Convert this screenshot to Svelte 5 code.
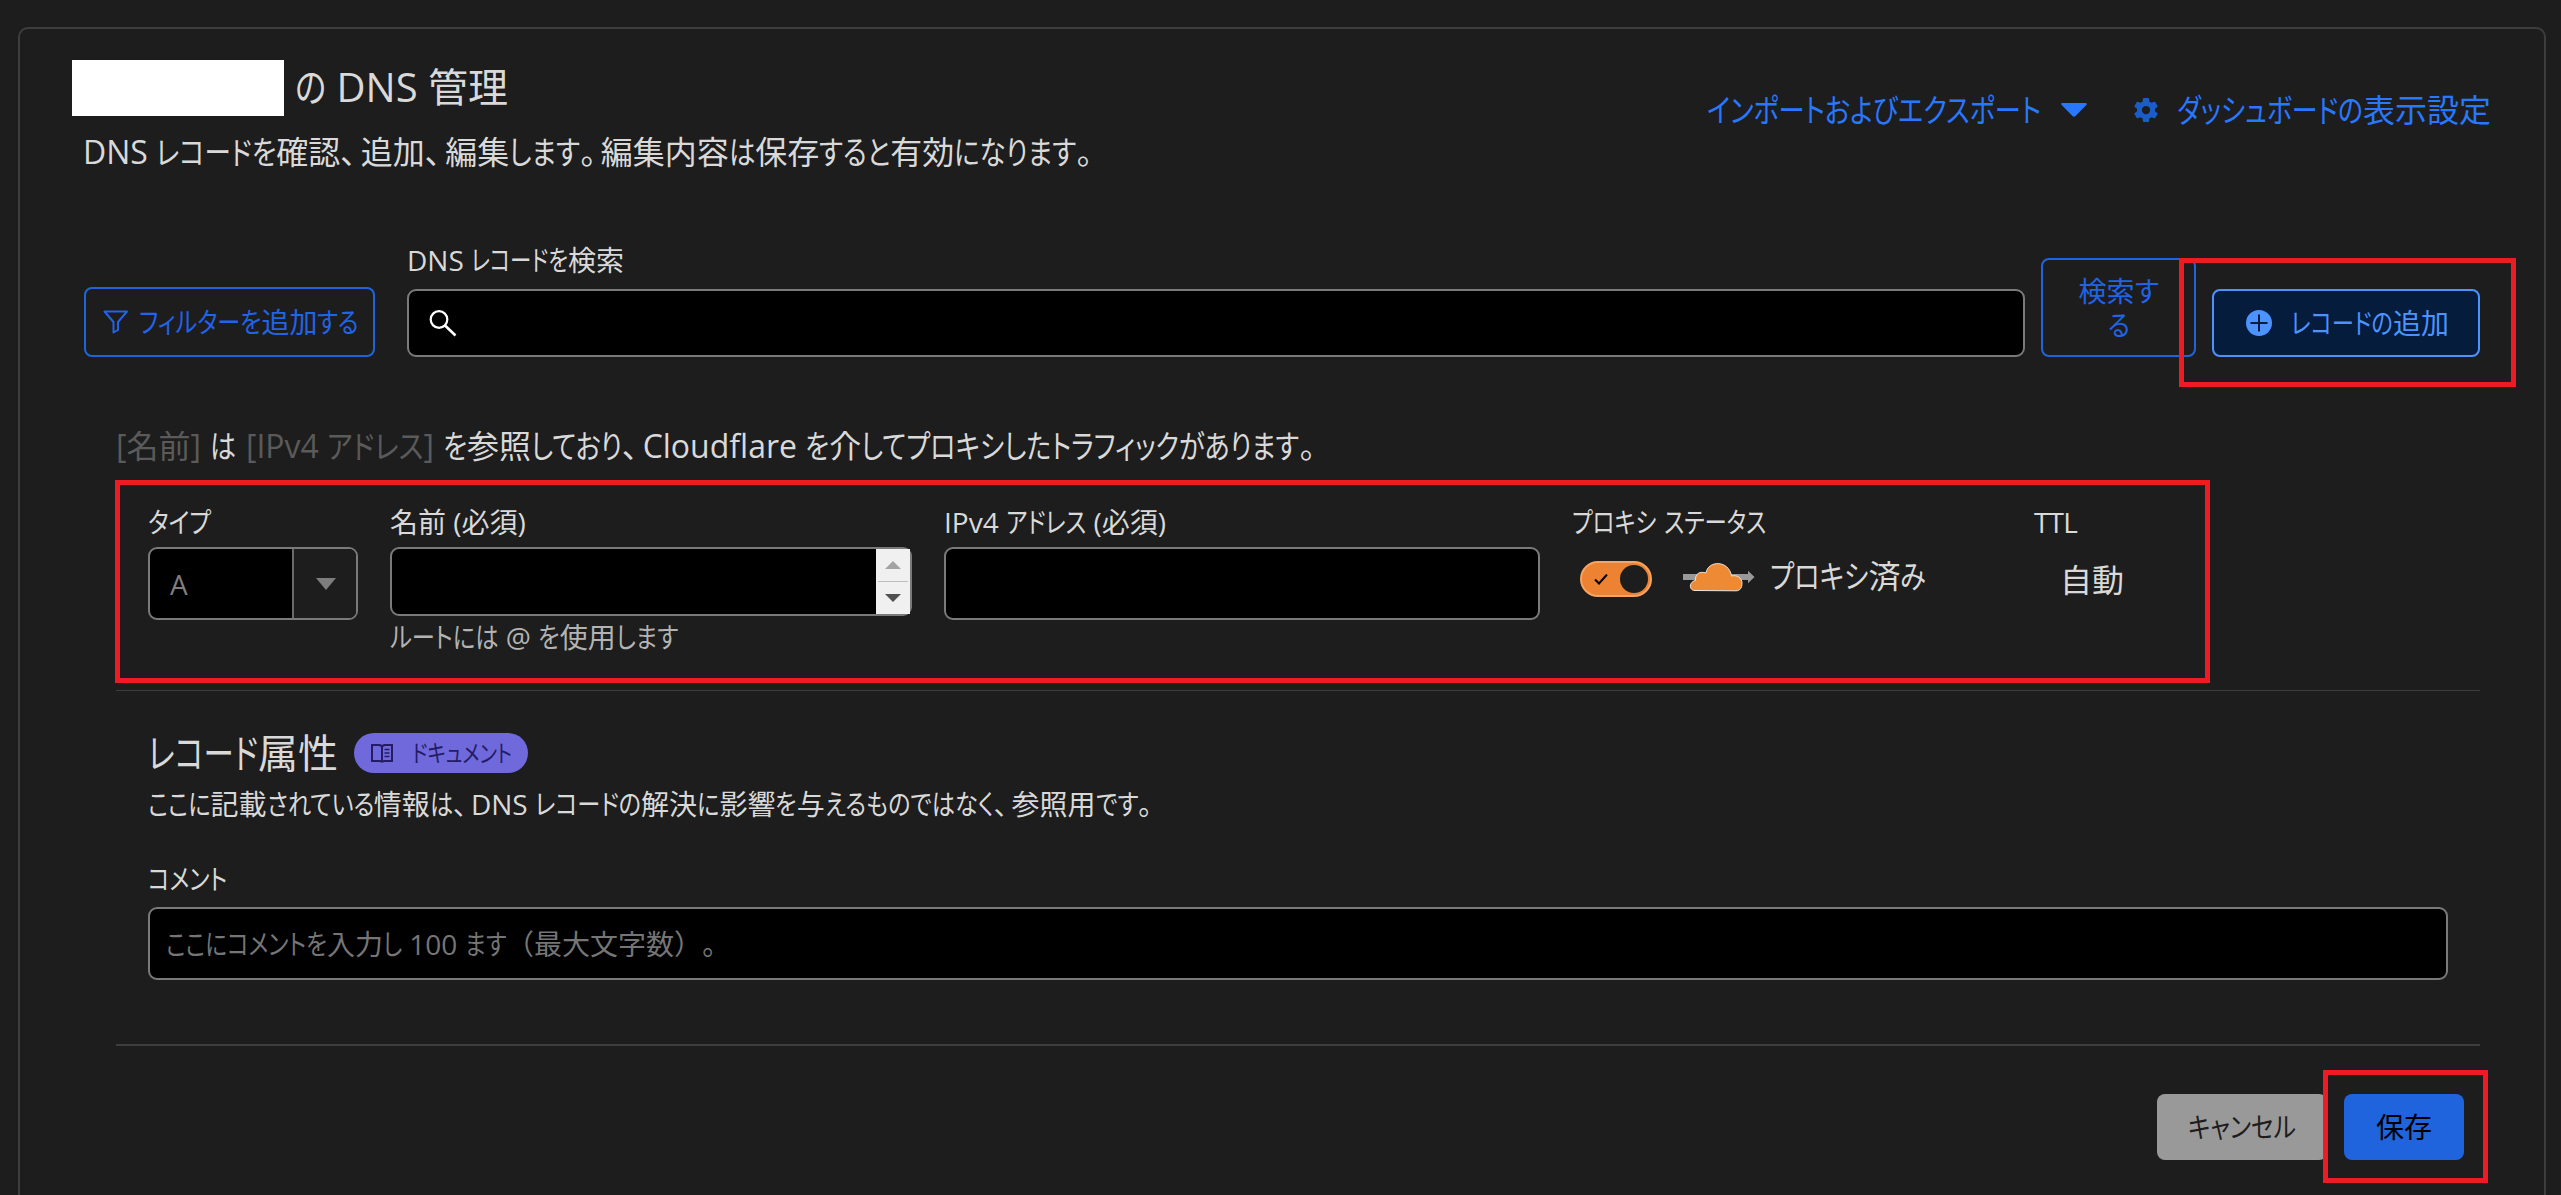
<script>
  // Kana are set narrower than kanji and Latin, as in a condensed UI face.
  const SPLIT = /([\u3040-\u30ff]+|[\u3001\u3002])/;
  const kindOf = (text) =>
    /^[\u3001\u3002]$/.test(text) ? 'stop' : /^[\u3040-\u30ff]/.test(text) ? 'kana' : 'plain';
  const runs = (s) =>
    s
      .split(SPLIT)
      .filter(Boolean)
      .map((text) => ({ text, kind: kindOf(text) }));

  // Condenses the kana runs of a line until the line is `target` px wide.
  function fit(node, target) {
    const kana = [...node.querySelectorAll('.k')];
    if (!kana.length) return;
    const widths = kana.map((k) => k.firstElementChild.getBoundingClientRect().width);
    const sum = widths.reduce((a, b) => a + b, 0);
    const rest = node.getBoundingClientRect().width - sum;
    const ratio = Math.max(0.6, Math.min(1.1, (target - rest) / sum));
    kana.forEach((k, i) => {
      k.style.width = `${widths[i] * ratio}px`;
      k.firstElementChild.style.transform = `scaleX(${ratio})`;
    });
  }
</script>

{#snippet t(text, width)}<span class="t" use:fit={width}>{#each runs(text) as r}{#if r.kind === 'kana'}<span class="k"><span class="ki">{r.text}</span></span>{:else if r.kind === 'stop'}<span class="stop">{r.text}</span>{:else}{r.text}{/if}{/each}</span>{/snippet}

<div class="page">
  <main class="panel">
    <header class="head">
      <div>
        <div class="title-row">
          <span class="redacted"></span>
          <h1>{@render t('の DNS 管理', 213)}</h1>
        </div>
        <p class="lead">{@render t('DNS レコードを確認、追加、編集します。編集内容は保存すると有効になります。', 1014)}</p>
      </div>
      <nav class="links">
        <a class="link" href="#export">
          {@render t('インポートおよびエクスポート', 334)}
          <svg class="caret" width="26" height="14" viewBox="0 0 26 14"><path d="M1.500 0h23q2.200.4.800 2L14.500 13q-1.500 1.600-3 0L.700 2Q-.700.400 1.500 0z" fill="currentColor" /></svg>
        </a>
        <a class="link" href="#settings">
          <svg class="gear" width="30" height="30" viewBox="0 0 24 24"><path fill="currentColor" fill-rule="evenodd" d="M19.140 12.940c.040-.300.060-.610.060-.940s-.020-.640-.070-.940l2.030-1.580a.49.49 0 0 0 .120-.610l-1.920-3.320a.488.488 0 0 0-.590-.220l-2.390.960a7.030 7.030 0 0 0-1.620-.940l-.360-2.540a.484.484 0 0 0-.480-.410h-3.840c-.240 0-.430.170-.470.410l-.360 2.540c-.590.240-1.130.570-1.620.940l-2.390-.960a.48.48 0 0 0-.590.220L2.740 8.870c-.120.210-.080.470.120.610l2.030 1.580c-.050.300-.090.630-.090.940s.020.640.070.940l-2.030 1.580a.49.49 0 0 0-.120.610l1.920 3.320c.120.220.370.290.590.220l2.390-.960c.500.380 1.030.700 1.620.940l.360 2.540c.050.240.240.410.480.410h3.840c.240 0 .440-.170.470-.410l.360-2.540c.590-.240 1.130-.560 1.620-.940l2.390.960c.220.080.470 0 .590-.220l1.920-3.320a.48.48 0 0 0-.120-.610zM12 15.300a3.300 3.300 0 1 1 0-6.600 3.300 3.300 0 0 1 0 6.600z" /></svg>
          {@render t('ダッシュボードの表示設定', 314)}
        </a>
      </nav>
    </header>

    <section class="toolbar">
      <button class="btn outline filter">
        <svg width="26" height="24" viewBox="0 0 26 24"><path d="M1.500 1.500h22.500l-9 10.500v8l-4.500 2.500V12z" fill="none" stroke="currentColor" stroke-width="2" stroke-linejoin="round" /></svg>
        {@render t('フィルターを追加する', 220)}
      </button>
      <div class="search">
        <span class="label">{@render t('DNS レコードを検索', 217)}</span>
        <div class="box">
          <svg width="28" height="27" viewBox="0 0 28 27"><g fill="none" stroke="#fff" stroke-width="2.200"><circle cx="10" cy="9.500" r="8.300" /><path d="M16 15.500l10.500 10" stroke-width="2.600" /></g></svg>
        </div>
      </div>
      <button class="btn outline submit">
        <span>{@render t('検索す', 80)}</span>
        <span>{@render t('る', 22)}</span>
      </button>
      <button class="btn add">
        <svg width="26" height="26" viewBox="0 0 26 26"><circle cx="13" cy="13" r="13" fill="currentColor" /><path d="M13 4.500v17M4.500 13h17" stroke="#051c3d" stroke-width="2" /></svg>
        {@render t('レコードの追加', 158)}
      </button>
      <div class="mark mark-add"></div>
    </section>

    <p class="summary">
      <span class="dim">{@render t('[名前]', 83)}</span>
      <span>{@render t('は', 26)}</span>
      <span class="dim">{@render t('[IPv4 アドレス]', 188)}</span>
      <span>{@render t('を参照しており、Cloudflare を介してプロキシしたトラフィックがあります。', 877)}</span>
    </p>

    <section class="record">
      <div class="field">
        <span class="label">{@render t('タイプ', 63)}</span>
        <div class="box select">
          <span class="value">A</span>
          <span class="drop"><svg width="20" height="12" viewBox="0 0 20 12"><path d="M0 0h20L10 12z" fill="#7e7e7e" /></svg></span>
        </div>
      </div>
      <div class="field">
        <span class="label">{@render t('名前 (必須)', 136)}</span>
        <div class="box name">
          <div class="spin">
            <span><svg width="16" height="8" viewBox="0 0 16 8"><path d="M0 8h16L8 0z" fill="#a3a3a3" /></svg></span>
            <span><svg width="16" height="8" viewBox="0 0 16 8"><path d="M0 0h16L8 8z" fill="#505050" /></svg></span>
          </div>
        </div>
        <span class="hint">{@render t('ルートには @ を使用します', 288)}</span>
      </div>
      <div class="field">
        <span class="label">{@render t('IPv4 アドレス (必須)', 222)}</span>
        <div class="box"></div>
      </div>
      <div class="field">
        <span class="label">{@render t('プロキシ ステータス', 194)}</span>
        <div class="proxy">
          <span class="toggle">
            <svg width="14" height="11" viewBox="0 0 14 11"><path d="M1 5.500l4 4 8-9" fill="none" stroke="#000" stroke-width="2" /></svg>
            <span class="knob"></span>
          </span>
          <svg class="cloud" width="72" height="30" viewBox="0 0 72 30">
            <path d="M0 11h65V7.700L71.500 14 65 20.300V17H0z" fill="#999" />
            <path d="M12 27.500C5.500 27.500 6 18.500 12.500 17.500C12 10.500 17 8 23 10C25-3 46-3 48.500 13C54 11.500 59 15 59 20C59 25 57 27.800 53 27.800z" fill="#ee8a34" stroke="#ece4dc" stroke-width="1" />
          </svg>
          <span class="status">{@render t('プロキシ済み', 156)}</span>
        </div>
      </div>
      <div class="field">
        <span class="label ttl">TTL</span>
        <span class="auto">自動</span>
      </div>
      <div class="mark mark-record"></div>
    </section>

    <hr />

    <section class="attrs">
      <div class="attrs-head">
        <h2>{@render t('レコード属性', 190)}</h2>
        <a class="badge" href="#docs">
          <svg width="22" height="21" viewBox="0 0 22 21"><g fill="none" stroke="currentColor" stroke-width="2"><path d="M1 2h7q3 0 3 2.500Q11 2 14 2h7v16h-7q-3 0-3 1.500Q11 18 8 18H1zM11 4v15" /><path d="M13.500 6.500h5M13.500 10h5M13.500 13.500h5" stroke-width="1.600" /></g></svg>
          {@render t('ドキュメント', 100)}
        </a>
      </div>
      <p class="note">{@render t('ここに記載されている情報は、DNS レコードの解決に影響を与えるものではなく、参照用です。', 1008)}</p>
      <span class="label comment-label">{@render t('コメント', 79)}</span>
      <div class="box comment">{@render t('ここにコメントを入力し 100 ます（最大文字数）。', 554)}</div>
    </section>

    <hr class="thick" />

    <footer class="actions">
      <button class="btn cancel">{@render t('キャンセル', 108)}</button>
      <button class="btn save">保存</button>
      <div class="mark mark-save"></div>
    </footer>
  </main>
</div>

<style>
  :global(body) {
    margin: 0;
    background: #1d1d1d;
  }
  .page {
    box-sizing: border-box;
    height: 1195px;
    padding: 27px 15px 0 18px;
    overflow: hidden;
    background: #1d1d1d;
    color: #d9d9d9;
    font-family: 'Open Sans', 'Noto Sans CJK JP', sans-serif;
    font-size: 28px;
    line-height: 40px;
  }
  .panel {
    box-sizing: border-box;
    height: 1200px;
    border: 2px solid #3d3d3d;
    border-radius: 10px;
  }
  h1,
  h2,
  p {
    margin: 0;
    font-weight: 400;
    white-space: nowrap;
  }
  a {
    text-decoration: none;
  }
  svg {
    display: block;
    flex: none;
  }
  .t {
    display: inline-block;
    white-space: pre;
  }
  .k {
    display: inline-block;
  }
  .ki {
    display: inline-block;
    transform-origin: 0 50%;
    font-feature-settings: 'palt';
  }
  .stop {
    display: inline-block;
    width: 0.64em;
    font-feature-settings: 'palt';
  }
  .head {
    display: flex;
    justify-content: space-between;
    height: 207px;
    padding: 0 53px 0 52px;
  }
  .title-row {
    display: flex;
    gap: 11px;
    height: 56px;
    margin-top: 31px;
  }
  .redacted {
    width: 212px;
    background: #fff;
  }
  h1 {
    font-size: 40px;
    line-height: 54px;
  }
  .lead {
    margin: 11px 0 0 11px;
    font-size: 32px;
    line-height: 49px;
  }
  .links {
    display: flex;
    gap: 44px;
    height: 48px;
    margin-top: 57px;
    font-size: 32px;
    line-height: 48px;
  }
  .link {
    display: flex;
    align-items: center;
    color: #2878ff;
  }
  .caret {
    margin-left: 20px;
  }
  .gear {
    margin-right: 16px;
    color: #1b5dc8;
  }
  .toolbar {
    position: relative;
    display: flex;
    align-items: flex-end;
    height: 121px;
    padding: 0 64px;
  }
  .btn {
    box-sizing: border-box;
    display: flex;
    align-items: center;
    justify-content: center;
    padding: 0;
    border: 2px solid transparent;
    border-radius: 8px;
    background: none;
    color: inherit;
    font: inherit;
    white-space: nowrap;
  }
  .outline {
    border-color: #2064dc;
    color: #2064e8;
  }
  .filter {
    gap: 10px;
    width: 291px;
    height: 70px;
    margin-right: 32px;
    padding-left: 3px;
  }
  .search {
    flex: 1;
    display: flex;
    flex-direction: column;
    gap: 5px;
  }
  .search .label {
    line-height: 48px;
  }
  .box {
    box-sizing: border-box;
    display: flex;
    align-items: center;
    height: 73px;
    border: 2px solid #7a7a7a;
    border-radius: 9px;
    background: #000;
  }
  .search .box {
    height: 68px;
    padding-left: 20px;
  }
  .submit {
    flex-direction: column;
    width: 155px;
    height: 99px;
    margin: 0 16px;
    line-height: 34px;
  }
  .add {
    gap: 19px;
    width: 268px;
    height: 68px;
    padding-left: 3px;
    border-color: #4c93ff;
    background: #051c3d;
    color: #4c93ff;
  }
  .mark {
    position: absolute;
    box-sizing: border-box;
    border: 5px solid #ed1c24;
    pointer-events: none;
  }
  .mark-add {
    left: 2159px;
    top: 22px;
    width: 337px;
    height: 129px;
  }
  .summary {
    display: flex;
    gap: 10px;
    height: 48px;
    margin: 65px 0 10px;
    padding-left: 96px;
    font-size: 32px;
    line-height: 48px;
  }
  .dim {
    margin-right: -1px;
    color: #5a5a5a;
  }
  .record {
    position: relative;
    display: grid;
    grid-template-columns: 210px 522px 596px 430px 200px;
    gap: 32px;
    box-sizing: border-box;
    height: 210px;
    padding: 20px 0 0 128px;
  }
  .field {
    display: flex;
    flex-direction: column;
  }
  .record .label {
    height: 44px;
    margin-bottom: 3px;
    line-height: 44px;
  }
  .record .ttl {
    letter-spacing: -0.8px;
  }
  .select {
    justify-content: space-between;
    align-items: stretch;
    overflow: hidden;
    color: #7e7e7e;
    line-height: 71px;
  }
  .value {
    padding-left: 20px;
  }
  .drop {
    display: flex;
    align-items: center;
    justify-content: center;
    width: 60px;
    padding-left: 2px;
    border-left: 2px solid #6a6a6a;
    background: #1d1d1d;
  }
  .name {
    justify-content: flex-end;
    height: 69px;
  }
  .spin {
    display: flex;
    flex-direction: column;
    width: 34px;
    height: 65px;
    background: #f0f0f0;
  }
  .spin span {
    flex: 1;
    display: flex;
    align-items: center;
    justify-content: center;
    margin: 0 2px;
  }
  .spin span + span {
    border-top: 1px solid #bdbdbd;
  }
  .hint {
    margin-top: 1px;
    color: #b3b3b3;
  }
  .proxy {
    display: flex;
    align-items: center;
    height: 64px;
    padding-left: 8px;
  }
  .toggle {
    box-sizing: border-box;
    display: flex;
    align-items: center;
    justify-content: space-between;
    width: 72px;
    height: 36px;
    padding: 0 2px 0 12px;
    border: 2px solid #f8a35f;
    border-radius: 18px;
    background: #ec8232;
  }
  .knob {
    width: 28px;
    height: 28px;
    border-radius: 50%;
    background: #1d1d1d;
  }
  .cloud {
    margin: 0 15px 2px 31px;
  }
  .status,
  .auto {
    font-size: 32px;
  }
  .status {
    margin-bottom: 6px;
  }
  .auto {
    margin: 13px 0 0 26px;
  }
  .mark-record {
    left: 95px;
    top: 0;
    width: 2095px;
    height: 203px;
  }
  hr {
    height: 1px;
    margin: 0 64px 0 96px;
    border: 0;
    background: #3d3d3d;
  }
  .thick {
    height: 2px;
    margin-top: 64px;
  }
  .attrs {
    padding: 40px 96px 0 128px;
  }
  .attrs-head {
    display: flex;
    align-items: center;
    height: 44px;
  }
  h2 {
    width: 206px;
    font-size: 40px;
    line-height: 44px;
  }
  .badge {
    display: flex;
    align-items: center;
    gap: 19px;
    box-sizing: border-box;
    width: 174px;
    height: 40px;
    padding-left: 17px;
    border-radius: 20px;
    background: #7069dc;
    color: #241c66;
    font-size: 24px;
  }
  .note {
    margin-top: 9px;
    line-height: 40px;
  }
  .comment-label {
    display: block;
    margin: 35px 0 8px;
    line-height: 40px;
  }
  .comment {
    padding-left: 16px;
    color: #757575;
  }
  .actions {
    position: relative;
    display: flex;
    justify-content: flex-end;
    gap: 17px;
    padding: 48px 80px 0 0;
  }
  .cancel {
    width: 170px;
    height: 66px;
    background: #999;
    color: #1d1d1d;
  }
  .save {
    width: 120px;
    height: 66px;
    background: #1f64dd;
    color: #000;
  }
  .mark-save {
    left: 2303px;
    top: 24px;
    width: 165px;
    height: 113px;
  }
</style>
